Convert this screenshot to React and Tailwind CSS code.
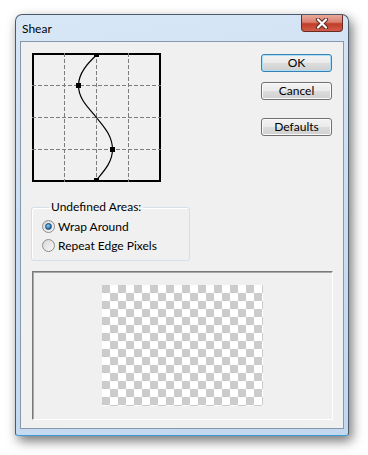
import React from 'react';

const font = { fontFamily: 'Lato, "Noto Sans", "Liberation Sans", sans-serif' };

const Curve = () => (
  <svg width="129" height="129" viewBox="0 0 129 129" className="block">
    {[32, 64, 96].map((p) => (
      <g key={p} stroke="#7c7c7c" strokeWidth="1" strokeDasharray="4 2">
        <line x1={p + 0.5} y1="0" x2={p + 0.5} y2="129" />
        <line x1="0" y1={p + 0.5} x2="129" y2={p + 0.5} />
      </g>
    ))}
    <path
      d="M64.5 2 C56 10 46.5 20 46.5 32.5 C46.5 47 58 56 64.5 64.5 C71 73 80.5 82 80.5 96.5 C80.5 109 72 118 64.5 127"
      fill="none"
      stroke="#000"
      strokeWidth="1.2"
    />
    <rect x="62" y="0" width="5" height="4" fill="#000" />
    <rect x="44" y="30" width="5" height="5" fill="#000" />
    <rect x="78" y="94" width="5" height="5" fill="#000" />
    <rect x="62" y="125" width="5" height="4" fill="#000" />
  </svg>
);

const Button = ({ label, primary }) => (
  <button
    className={
      'w-[71px] h-[18px] rounded-[3px] border text-[12px] leading-none text-black flex items-center justify-center bg-[linear-gradient(#f3f3f3_0%,#ebebeb_48%,#dddddd_50%,#cfcfcf_100%)] ' +
      (primary
        ? 'border-[#3c7fb1] shadow-[inset_0_0_0_1px_#a6e0fb]'
        : 'border-[#707070] shadow-[inset_0_0_0_1px_#fbfbfb]')
    }
    style={font}
  >
    {label}
  </button>
);

const Radio = ({ checked, label }) => (
  <div className="h-[19px] flex items-center gap-[3px]">
    <div className="w-[13px] h-[13px] rounded-full border border-[#8c8c8c] bg-[linear-gradient(135deg,#d8d8d8,#f8f8f8)] flex items-center justify-center">
      {checked && (
        <div className="w-[7px] h-[7px] rounded-full bg-[radial-gradient(circle_at_40%_35%,#8fd2f7,#1c5d9a_75%)] border border-[#1a4b7a]" />
      )}
    </div>
    <span className="text-[12px] leading-none text-black">{label}</span>
  </div>
);

export default function App() {
  return (
    <div className="w-[368px] h-[455px] bg-white pt-[14px] pl-[15px]" style={font}>
      <div className="w-[334px] h-[422px] rounded-t-[7px] rounded-b-[3px] border border-[#4c5a6b] border-b-[#3a9bd6] bg-[linear-gradient(170deg,#d8e7f6_0%,#cddff2_40%,#c3d8ef_100%)] shadow-[3px_5px_12px_rgba(0,0,0,0.55)] flex flex-col">
        <div className="h-[26px] flex items-start justify-between">
          <span className="pl-[6px] pt-[6px] text-[12px] leading-[15px] text-black">Shear</span>
          <div className="w-[42px] h-[17px] mr-[5px] rounded-b-[4px] border border-t-0 border-[#6b2a22] bg-[linear-gradient(#eaa99b_0%,#d98070_45%,#c23c28_55%,#cf5e4a_100%)] flex items-center justify-center">
            <svg width="14" height="11" viewBox="0 0 14 11">
              <path d="M3 1.5 L11 9.5 M11 1.5 L3 9.5" stroke="#5b2a22" strokeWidth="4.2" strokeLinecap="round" />
              <path d="M3 1.5 L11 9.5 M11 1.5 L3 9.5" stroke="#fff" strokeWidth="2.2" strokeLinecap="round" />
            </svg>
          </div>
        </div>

        <div className="flex-1 mx-[4px] mb-[6px] border border-[#8598ad] bg-[#f0f0f0] pl-[11px] pt-[11px] flex flex-col">
          <div className="flex">
            <div className="w-[129px] h-[129px] border-2 border-black bg-[#f0f0f0] box-border relative">
              <div className="-m-[2px]">
                <Curve />
              </div>
            </div>
            <div className="ml-[100px] mt-[1px] flex flex-col">
              <Button label="OK" primary />
              <div className="mt-[10px]">
                <Button label="Cancel" />
              </div>
              <div className="mt-[18px]">
                <Button label="Defaults" />
              </div>
            </div>
          </div>

          <fieldset className="-ml-px mt-[17px] w-[159px] border border-[#d5dfe5] rounded-[3px] pl-[10px] pb-[5px] shadow-[inset_1px_1px_0_#ffffff]">
            <legend className="ml-[7px] px-[2px] text-[12px] leading-[16px] text-black">Undefined Areas:</legend>
            <div className="pt-[2px]">
              <Radio checked label="Wrap Around" />
              <Radio label="Repeat Edge Pixels" />
            </div>
          </fieldset>

          <div className="mt-[10px] w-[301px] h-[149px] border border-t-[#7a7a7a] border-l-[#7a7a7a] border-b-white border-r-white shadow-[inset_1px_1px_0_#a8a8a8] flex items-center justify-center">
            <div className="w-[161px] h-[121px] bg-[conic-gradient(#fff_25%,#cccccc_0_50%,#fff_0_75%,#cccccc_0)] bg-[length:16px_16px]" />
          </div>
        </div>
      </div>
    </div>
  );
}
